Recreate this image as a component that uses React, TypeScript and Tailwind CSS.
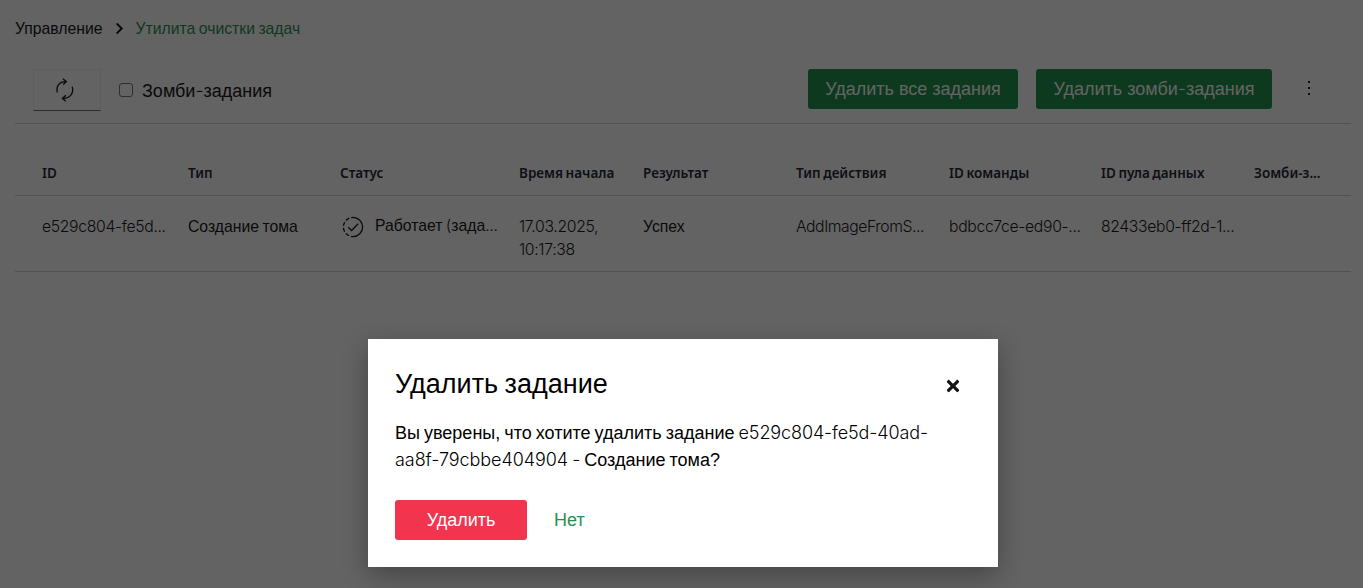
import React from 'react';
import { FaTimes, FaChevronRight } from 'react-icons/fa';

const columns = [
  { key: 'id', title: 'ID', width: 'w-[146px]' },
  { key: 'type', title: 'Тип', width: 'w-[152px]' },
  { key: 'status', title: 'Статус', width: 'w-[179px]' },
  { key: 'start', title: 'Время начала', width: 'w-[124px]' },
  { key: 'result', title: 'Результат', width: 'w-[153px]' },
  { key: 'action', title: 'Тип действия', width: 'w-[153px]' },
  { key: 'command', title: 'ID команды', width: 'w-[152px]' },
  { key: 'pool', title: 'ID пула данных', width: 'w-[153px]' },
  { key: 'zombie', title: 'Зомби-з...', width: 'w-[97px]' },
];

function Latin({ children, className = '' }: { children: React.ReactNode; className?: string }) {
  return <span className={`font-[Inter,sans-serif] leading-none font-light ${className}`}>{children}</span>;
}

function RefreshIcon() {
  return (
    <svg width="18" height="24" viewBox="0 0 18 24" fill="none" stroke="#151515" strokeWidth="1.3">
      <path d="M1.4 14.5C-.3 8.5 3 3.6 9.5 3.6M6.9.8l3.4 2.8-3.1 2.9" />
      <path d="M16.2 8.8c1.9 6.2-1.8 11.4-9.2 11.6M9.8 17.3l-3.4 3.1 3.4 2.8" />
    </svg>
  );
}

function RunningIcon() {
  return (
    <svg width="22" height="22" viewBox="0 0 22 22" fill="none" stroke="#151515" strokeWidth="1.3">
      <path d="M11 1.4a9.6 9.6 0 0 1 0 19.2" />
      <path d="M11 20.6a9.6 9.6 0 0 1 0-19.2" strokeDasharray="4 2.03" strokeDashoffset="2" />
      <path d="M6.2 11.2l3.4 3.3 6.5-6.8" />
    </svg>
  );
}

function Breadcrumb() {
  return (
    <nav className="flex h-[57px] items-center pl-[15px] text-[15.75px]">
      <span className="text-[#151515]">Управление</span>
      <FaChevronRight className="mr-[10px] ml-[10px] size-[13px] text-[#151515]" />
      <span className="text-[#1f9150]">Утилита очистки задач</span>
    </nav>
  );
}

function Toolbar() {
  return (
    <div className="mr-3 ml-[15px] flex h-[67px] items-start border-b border-[#d2d2d2] pt-3 pl-[18px] text-[18px]">
      <button className="flex h-[42px] w-[68px] items-center justify-center border border-[#f0f0f0] border-b-[#6a6e73] pr-[5px] pb-px">
        <RefreshIcon />
      </button>
      <label className="ml-[18px] flex h-[42px] items-center gap-[9px]">
        <span className="size-[14px] rounded-[3px] border border-[#767676]" />
        <span className="pt-[2px] text-[#151515]">Зомби<Latin>-</Latin>задания</span>
      </label>
      <button className="ml-auto h-10 w-[210px] rounded-[3px] bg-[#1d914a] text-white">Удалить все задания</button>
      <button className="ml-[18px] h-10 w-[236px] rounded-[3px] bg-[#1d914a] text-white">
        Удалить зомби<Latin>-</Latin>задания
      </button>
      <div className="mr-[41px] ml-[35px] flex h-[38px] w-[3px] flex-col items-center justify-center gap-1">
        <i className="size-[2px] bg-[#151515]" />
        <i className="size-[2px] bg-[#151515]" />
        <i className="size-[2px] bg-[#151515]" />
      </div>
    </div>
  );
}

function TaskTable() {
  return (
    <div className="mr-3 ml-[15px]">
      <div className="flex h-[72px] items-end border-b border-[#d2d2d2] pb-3 pl-[27px]">
        {columns.map((column) => (
          <div key={column.key} className={`${column.width} font-['Noto_Sans',sans-serif] text-[13.5px] leading-5 font-semibold whitespace-nowrap text-[#1f2735]`}>
            {column.title}
          </div>
        ))}
      </div>
      <div className="flex h-[76px] border-b border-[#d2d2d2] pt-[19px] pl-[27px] text-[15.75px] leading-[23px] whitespace-nowrap text-[#151515]">
        <div className="w-[146px]"><Latin className="tracking-[-0.34px]">e529c804-fe5d...</Latin></div>
        <div className="w-[152px]">Создание тома</div>
        <div className="flex w-[179px] gap-[11px]">
          <span className="mt-px ml-[2px]"><RunningIcon /></span>
          <span className="-mt-px">Работает <Latin>(</Latin>зада<Latin className="tracking-[-0.34px]">...</Latin></span>
        </div>
        <div className="w-[124px]"><Latin className="tracking-[-0.34px]">17.03.2025,<br />10:17:38</Latin></div>
        <div className="w-[153px]">Успех</div>
        <div className="w-[153px]"><Latin className="tracking-[-0.45px]">AddImageFromS...</Latin></div>
        <div className="w-[152px]"><Latin className="tracking-[-0.34px]">bdbcc7ce-ed90-...</Latin></div>
        <div className="w-[153px]"><Latin className="tracking-[-0.36px]">82433eb0-ff2d-1...</Latin></div>
      </div>
    </div>
  );
}

function DeleteDialog() {
  return (
    <div className="h-[228px] w-[630px] bg-white px-[27px] pt-[27px] text-[18px] leading-[27px] text-black shadow-[0_8px_24px_rgba(0,0,0,0.3)]">
      <div className="flex h-[36px] items-center justify-between">
        <h1 className="text-[27px] leading-[35px]">Удалить задание</h1>
        <FaTimes className="mt-[4px] mr-[9px] size-[18px] text-[#151515]" />
      </div>
      <p className="mt-[18px] whitespace-nowrap">
        Вы уверены, что хотите удалить задание <Latin className="tracking-[-0.12px]">e529c804-fe5d-40ad-</Latin>
        <br />
        <Latin className="tracking-[-0.06px]">aa8f-79cbbe404904 - </Latin>Создание тома?
      </p>
      <div className="mt-[26px] flex">
        <button className="h-10 w-[132px] rounded-[3px] bg-[#f3344f] pt-px text-white">Удалить</button>
        <button className="ml-[27px] h-10 pt-px text-[#1f9150]">Нет</button>
      </div>
    </div>
  );
}

export default function App() {
  return (
    <div className="relative h-[588px] w-[1363px] overflow-hidden bg-white font-['Liberation_Sans',Arial,sans-serif] [word-spacing:-0.06em]">
      <Breadcrumb />
      <Toolbar />
      <TaskTable />
      {/* Backdrop */}
      <div className="absolute inset-0 flex items-end bg-[#030303]/62 pb-[21px] pl-[368px]">
        <DeleteDialog />
      </div>
    </div>
  );
}
